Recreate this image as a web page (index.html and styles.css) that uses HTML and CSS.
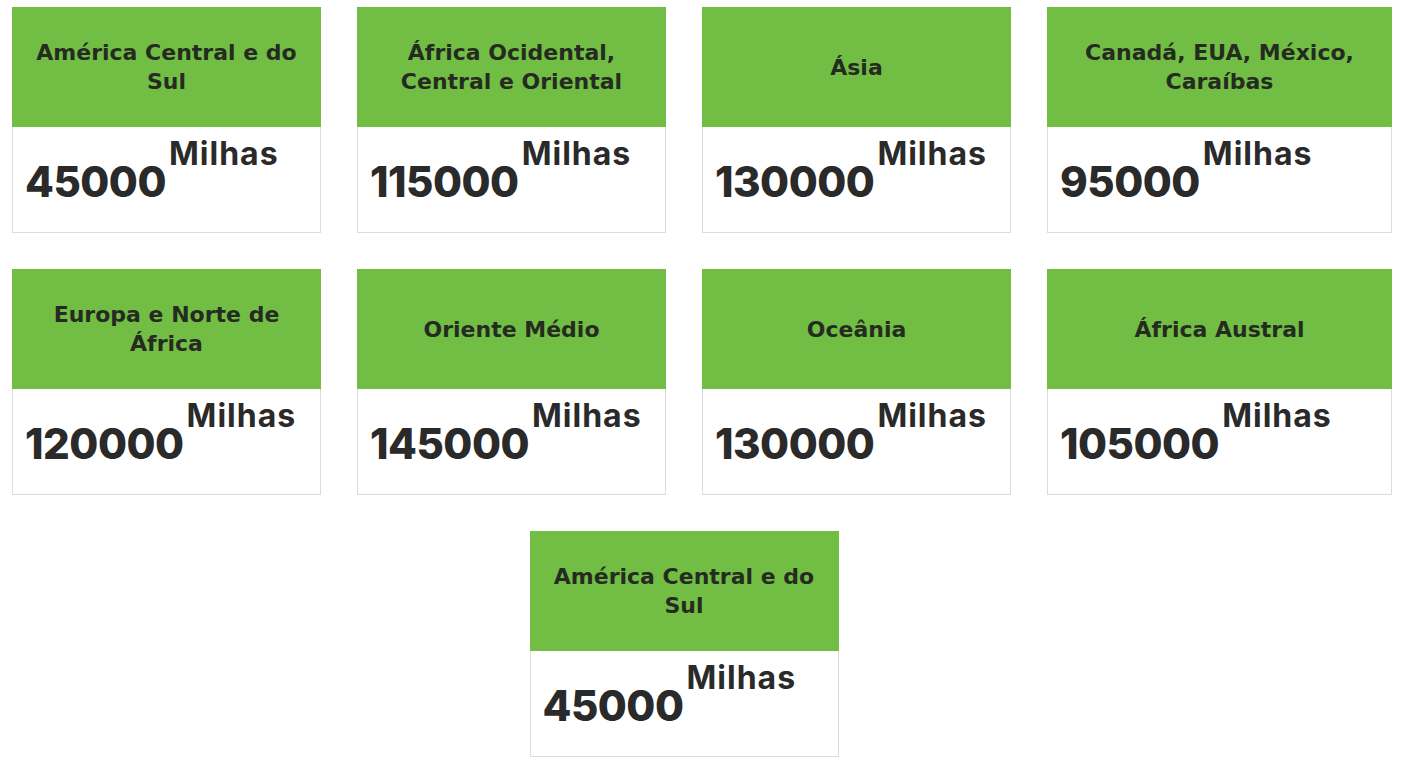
FILE: index.html
```html
<!DOCTYPE html>
<html lang="pt">

<head>
    <meta charset="UTF-8">
    <meta name="viewport" content="width=device-width, initial-scale=1.0">
    <title>Milhas por destino</title>
    <link rel="stylesheet" href="styles.css">
</head>

<body>

    <div class="milhas-grid">

        <div class="card">
            <div class="card-head"><h3>América Central e do Sul</h3></div>
            <div class="card-body"><span class="valor">45000</span><sup>Milhas</sup></div>
        </div>

        <div class="card">
            <div class="card-head"><h3>África Ocidental, Central e Oriental</h3></div>
            <div class="card-body"><span class="valor">115000</span><sup>Milhas</sup></div>
        </div>

        <div class="card">
            <div class="card-head"><h3>Ásia</h3></div>
            <div class="card-body"><span class="valor">130000</span><sup>Milhas</sup></div>
        </div>

        <div class="card">
            <div class="card-head"><h3>Canadá, EUA, México, Caraíbas</h3></div>
            <div class="card-body"><span class="valor">95000</span><sup>Milhas</sup></div>
        </div>

        <div class="card">
            <div class="card-head"><h3>Europa e Norte de África</h3></div>
            <div class="card-body"><span class="valor">120000</span><sup>Milhas</sup></div>
        </div>

        <div class="card">
            <div class="card-head"><h3>Oriente Médio</h3></div>
            <div class="card-body"><span class="valor">145000</span><sup>Milhas</sup></div>
        </div>

        <div class="card">
            <div class="card-head"><h3>Oceânia</h3></div>
            <div class="card-body"><span class="valor">130000</span><sup>Milhas</sup></div>
        </div>

        <div class="card">
            <div class="card-head"><h3>África Austral</h3></div>
            <div class="card-body"><span class="valor">105000</span><sup>Milhas</sup></div>
        </div>

        <div class="card">
            <div class="card-head"><h3>América Central e do Sul</h3></div>
            <div class="card-body"><span class="valor">45000</span><sup>Milhas</sup></div>
        </div>

    </div>

</body>

</html>
```

FILE: styles.css
```css
body {
    margin: 0;
    background-color: #fff;
    font-family: "DejaVu Sans", "Open Sans", sans-serif;
    color: #2a2a2a;
}

.milhas-grid {
    width: 1380px;
    margin-left: 12px;
    display: flex;
    flex-wrap: wrap;
    justify-content: center;
    padding-top: 7px;
}

.card {
    width: 309px;
    margin: 0 36px 36px 0;
}

/* last column has no gutter, so it is wider */
.card:nth-child(4n) {
    width: 345px;
    margin-right: 0;
}

.card-head {
    height: 120px;
    background-color: #72be44;
    display: flex;
    align-items: center;
    justify-content: center;
    padding: 0 20px;
}

.card-head h3 {
    margin: 0;
    font-size: 22px;
    font-weight: 700;
    line-height: 29px;
    text-align: center;
    color: #262b22;
}

.card-body {
    height: 106px;
    box-sizing: border-box;
    border: 1px solid #dcdcdc;
    border-top: none;
    padding: 11px 12px 0;
    font-family: Inter, "DejaVu Sans", sans-serif;
    font-size: 42px;
    line-height: 42px;
    white-space: nowrap;
}

.valor {
    font-weight: 800;
    letter-spacing: -0.5px;
}

sup {
    font-size: 32px;
    font-weight: 700;
    letter-spacing: 1px;
    vertical-align: 32px;
    line-height: 32px;
    margin-left: 3px;
}
```
